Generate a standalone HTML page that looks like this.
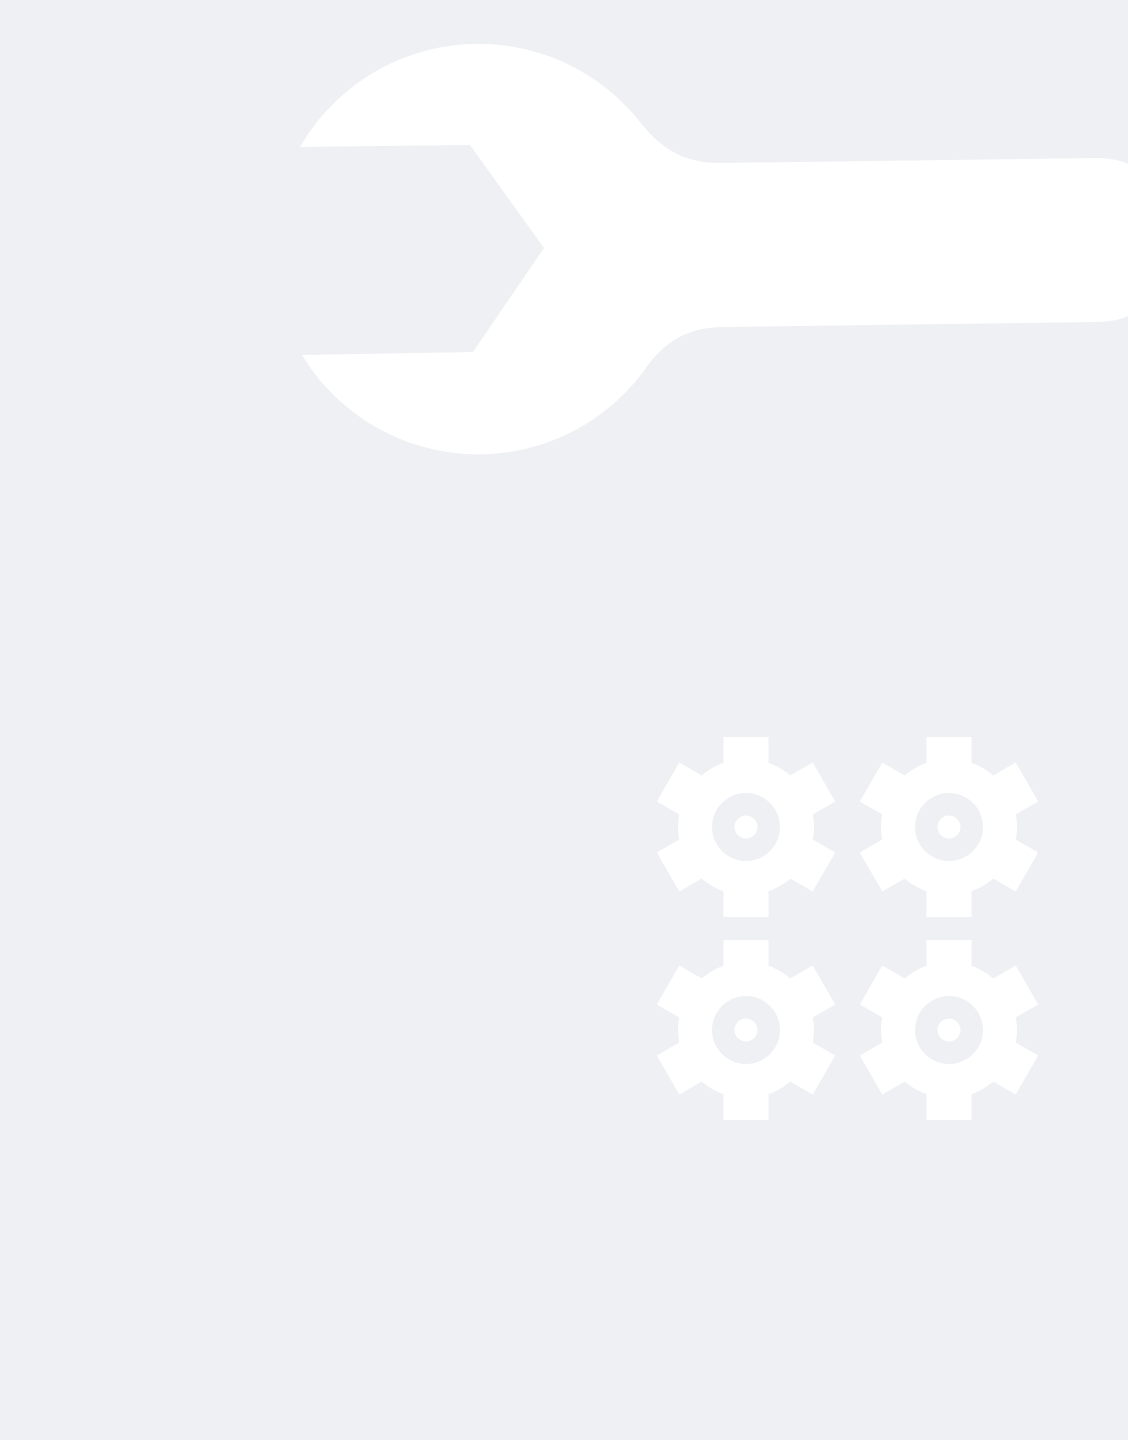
<!DOCTYPE html>
<html><head><style>
html,body{margin:0;padding:0;background:#eef0f4;width:1128px;height:1440px;overflow:hidden}
svg{position:absolute;left:0;top:0}
</style></head><body>
<svg width="1128" height="1440" viewBox="0 0 1128 1440">
<defs>
<g id="gear">
<circle r="68" fill="#fff"/>
<rect x="-22.5" y="-90" width="45" height="180" fill="#fff"/>
<rect x="-22.5" y="-90" width="45" height="180" fill="#fff" transform="rotate(60)"/>
<rect x="-22.5" y="-90" width="45" height="180" fill="#fff" transform="rotate(120)"/>
<circle r="34" fill="#eef0f4"/>
<circle r="11.5" fill="#fff"/>
</g>
</defs>
<path fill="#fff" d="M300,147 A206,206 0 0 1 640,122 C665,154 690,163 720,163 L1098,158 A82,82 0 0 1 1098,322 L724,327 C695,327 670,336 648,365 A206,206 0 0 1 302,355 L473,352 L544,248 L470,145 Z"/>
<use href="#gear" x="746" y="827"/>
<use href="#gear" x="949" y="827"/>
<use href="#gear" x="746" y="1030"/>
<use href="#gear" x="949" y="1030"/>
</svg>
</body></html>
